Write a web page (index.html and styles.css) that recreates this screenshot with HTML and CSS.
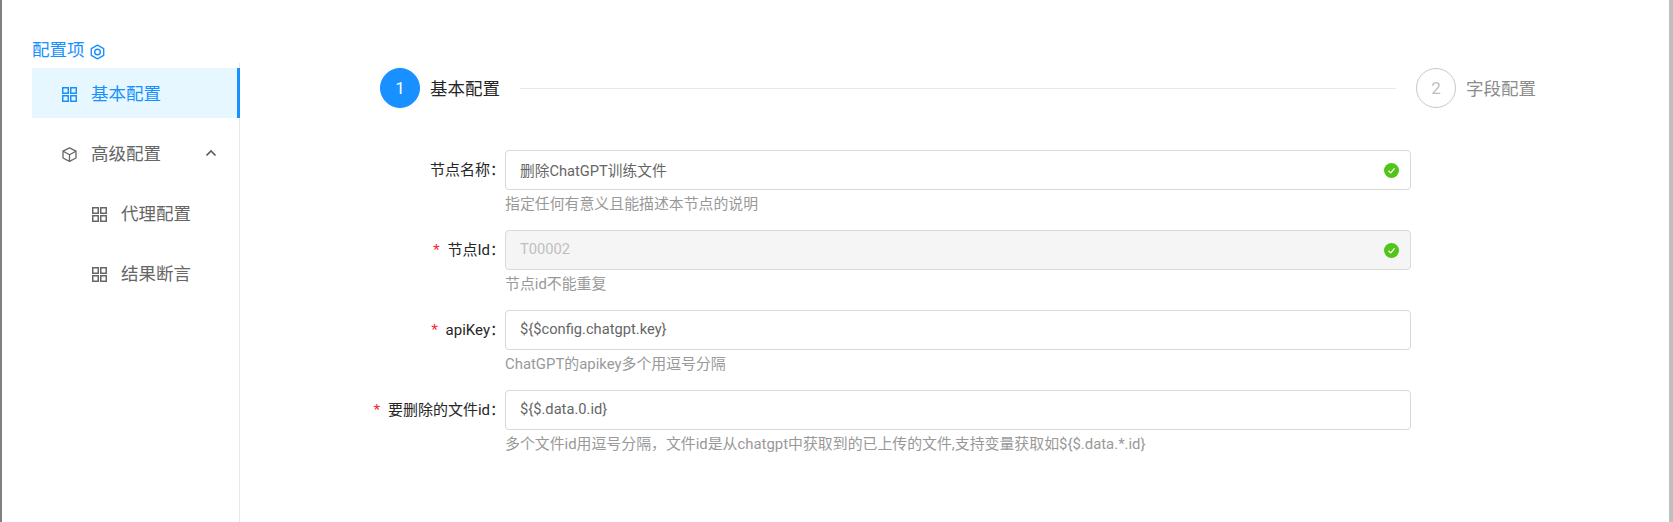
FILE: index.html
```html
<!DOCTYPE html>
<html lang="zh-CN">
<head>
<meta charset="utf-8">
<title>配置项</title>
<link rel="stylesheet" href="styles.css">
</head>
<body>
<div class="page">
  <aside class="sider">
    <div class="sider-title">配置项
      <svg class="hex" viewBox="0 0 16 17" width="15" height="16"><path d="M8 1.200 14.600 5V12L8 15.800 1.400 12V5Z" fill="none" stroke="#1890ff" stroke-width="1.500" stroke-linejoin="round"/><circle cx="8" cy="8.500" r="3" fill="none" stroke="#1890ff" stroke-width="1.500"/></svg>
    </div>
    <nav class="menu">
      <a class="item active">
        <svg class="ico" viewBox="0 0 15 15" width="15" height="15"><g fill="none" stroke="currentColor" stroke-width="1.500"><rect x=".75" y=".75" width="5.500" height="5.500"/><rect x="8.750" y=".75" width="5.500" height="5.500"/><rect x=".75" y="8.750" width="5.500" height="5.500"/><rect x="8.750" y="8.750" width="5.500" height="5.500"/></g></svg>
        <span class="txt">基本配置</span>
      </a>
      <a class="item">
        <svg class="ico" viewBox="0 0 15 15" width="15" height="15"><g fill="none" stroke="currentColor" stroke-width="1.300" stroke-linejoin="round"><path d="M7.500.8 14 4.200V11L7.500 14.400 1 11V4.200Z"/><path d="M1.200 4.300 7.500 7.700 13.800 4.300M7.500 7.700V14.200"/></g></svg>
        <span class="txt">高级配置</span>
        <svg class="chev" viewBox="0 0 12 8" width="12" height="8"><path d="M1.500 6.500 6 2l4.500 4.500" fill="none" stroke="currentColor" stroke-width="1.600"/></svg>
      </a>
      <a class="item sub">
        <svg class="ico" viewBox="0 0 15 15" width="15" height="15"><g fill="none" stroke="currentColor" stroke-width="1.500"><rect x=".75" y=".75" width="5.500" height="5.500"/><rect x="8.750" y=".75" width="5.500" height="5.500"/><rect x=".75" y="8.750" width="5.500" height="5.500"/><rect x="8.750" y="8.750" width="5.500" height="5.500"/></g></svg>
        <span class="txt">代理配置</span>
      </a>
      <a class="item sub">
        <svg class="ico" viewBox="0 0 15 15" width="15" height="15"><g fill="none" stroke="currentColor" stroke-width="1.500"><rect x=".75" y=".75" width="5.500" height="5.500"/><rect x="8.750" y=".75" width="5.500" height="5.500"/><rect x=".75" y="8.750" width="5.500" height="5.500"/><rect x="8.750" y="8.750" width="5.500" height="5.500"/></g></svg>
        <span class="txt">结果断言</span>
      </a>
    </nav>
  </aside>
  <main class="content">
    <div class="steps">
      <div class="circle on">1</div>
      <div class="step-title">基本配置</div>
      <div class="step-line"></div>
      <div class="circle">2</div>
      <div class="step-title muted">字段配置</div>
    </div>
    <form class="form">
      <label class="lbl">节点名称：</label>
      <div class="field">
        <div class="input"><span class="val">删除ChatGPT训练文件</span><svg class="ok" viewBox="0 0 16 16" width="15" height="15"><circle cx="8" cy="8" r="8" fill="#52c41a"/><path d="M4.800 8.200 7.200 10.500 11.200 5.800" fill="none" stroke="#fff" stroke-width="1.300"/></svg></div>
        <div class="help">指定任何有意义且能描述本节点的说明</div>
      </div>
      <label class="lbl"><i>*</i>节点Id：</label>
      <div class="field">
        <div class="input disabled"><span class="val">T00002</span><svg class="ok" viewBox="0 0 16 16" width="15" height="15"><circle cx="8" cy="8" r="8" fill="#52c41a"/><path d="M4.800 8.200 7.200 10.500 11.200 5.800" fill="none" stroke="#fff" stroke-width="1.300"/></svg></div>
        <div class="help">节点id不能重复</div>
      </div>
      <label class="lbl"><i>*</i>apiKey：</label>
      <div class="field">
        <div class="input"><span class="val">${$config.chatgpt.key}</span></div>
        <div class="help">ChatGPT的apikey多个用逗号分隔</div>
      </div>
      <label class="lbl"><i>*</i>要删除的文件id：</label>
      <div class="field">
        <div class="input"><span class="val">${$.data.0.id}</span></div>
        <div class="help">多个文件id用逗号分隔，文件id是从chatgpt中获取到的已上传的文件,支持变量获取如${$.data.*.id}</div>
      </div>
    </form>
  </main>
</div>
</body>
</html>
```
FILE: styles.css
```css
* { box-sizing: border-box; }
html, body { margin: 0; height: 100%; overflow: hidden; }
body {
  font-family: Roboto, "Noto Sans CJK SC", sans-serif;
  color: #262626;
  background: #fff;
}
.page {
  display: flex;
  height: 522px;
  border-left: 2px solid #808080;
  border-right: 4px solid #bfbfbf;
  padding: 38px 0 0 30px;
}
.sider { width: 209px; flex: none; display: flex; flex-direction: column; }
.sider-title {
  height: 25px;
  display: flex;
  align-items: center;
  gap: 5px;
  font-size: 17.5px;
  color: #1890ff;
  line-height: 25px;
}
.hex { display: block; margin-top: 2px; }
.menu {
  flex: 1;
  border-right: 1px solid #e8e8e8;
  margin-right: 1px;
  padding-top: 5px;
}
.item {
  display: flex;
  align-items: center;
  height: 50px;
  margin-bottom: 10px;
  padding: 0 22px 0 30px;
  font-size: 17.5px;
  color: #666;
}
.item .ico { margin: 2px 14px 0 0; flex: none; color: #666; }
.item .txt { padding-bottom: 2px; }
.item .chev { margin-left: auto; color: #595959; }
.item.sub { padding-left: 60px; }
.item.active { background: #e6f7ff; color: #1890ff; margin-right: -1px; border-right: 3px solid #1890ff; }
.item.active .ico { color: #1890ff; }
.content { flex: 1; padding: 30px 0 0 139px; }
.steps { display: flex; align-items: center; width: 1156px; height: 40px; }
.circle {
  width: 40px;
  height: 40px;
  border-radius: 50%;
  border: 1px solid #c8c8c8;
  color: #bfbfbf;
  display: flex;
  align-items: center;
  justify-content: center;
  font-size: 17px;
  flex: none;
}
.circle.on { background: #1890ff; border-color: #1890ff; color: #fff; }
.step-title { font-size: 17.5px; margin-left: 10px; padding-bottom: 2px; color: #262626; flex: none; }
.step-title.muted { color: #8c8c8c; }
.step-line { flex: 1; height: 1px; background: #e8e8e8; margin: 0 20px; }
.form {
  display: grid;
  grid-template-columns: 125px 906px;
  grid-auto-rows: 80px;
  margin-top: 42px;
}
.lbl {
  height: 40px;
  display: flex;
  align-items: center;
  justify-content: flex-end;
  padding-bottom: 3px;
  font-size: 15px;
  color: #262626;
  white-space: nowrap;
}
.lbl i { color: #f5222d; font-style: normal; font-family: "Liberation Mono", monospace; font-size: 17px; margin-right: 6px; transform: translateY(3px); }
.input {
  height: 40px;
  border: 1px solid #d9d9d9;
  border-radius: 4px;
  display: flex;
  align-items: center;
  justify-content: space-between;
  padding: 0 11px 0 14px;
  font-size: 14.7px;
  color: #666;
  background: #fff;
}
.input .val { padding-bottom: 2px; }
.input.disabled { background: #f5f5f5; color: #bfbfbf; }
.help { font-size: 14.9px; line-height: 24px; margin-top: 2px; color: #999; white-space: nowrap; }
```
